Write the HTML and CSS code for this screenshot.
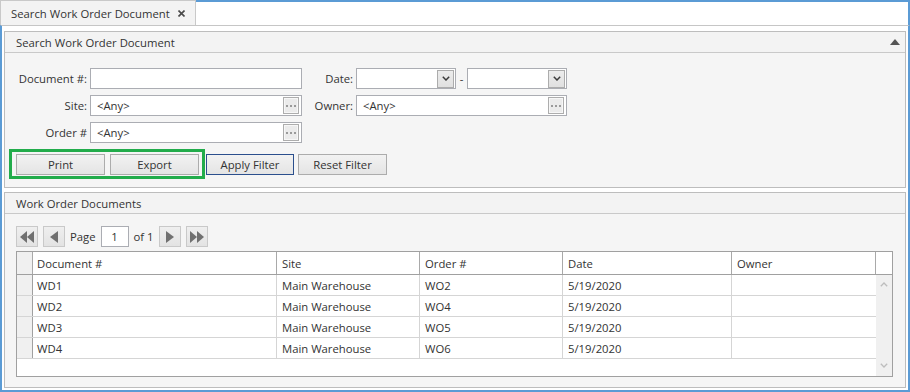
FILE: index.html
```html
<!DOCTYPE html>
<html lang="en">
<head>
    <meta charset="UTF-8">
    <meta name="viewport" content="width=device-width, initial-scale=1.0">
    <title>Search Work Order Document</title>
    <link rel="stylesheet" href="styles.css">
</head>
<body>
<div class="window">

    <div class="tabstrip">
        <div class="tab">
            <span>Search Work Order Document</span>
            <svg class="tab-close" width="7" height="7" viewBox="0 0 7 7"><path d="M0.5 0.5 L6.5 6.5 M6.5 0.5 L0.5 6.5" stroke="#4a4a4a" stroke-width="1.6"/></svg>
        </div>
        <div class="tab-fill"></div>
    </div>

    <div class="content">

        <!-- Filter panel -->
        <section class="panel panel-filter">
            <div class="panel-head">
                <span>Search Work Order Document</span>
                <svg class="collapse" width="10" height="6" viewBox="0 0 10 6"><polygon points="0,6 10,6 5,0" fill="#555"/></svg>
            </div>
            <div class="panel-body">
                <div class="form">
                    <div class="form-col form-left">
                        <div class="field">
                            <label>Document #:</label>
                            <div class="input"></div>
                        </div>
                        <div class="field">
                            <label>Site:</label>
                            <div class="input"><span>&lt;Any&gt;</span><span class="ellipsis"><i></i><i></i><i></i></span></div>
                        </div>
                        <div class="field">
                            <label>Order #</label>
                            <div class="input"><span>&lt;Any&gt;</span><span class="ellipsis"><i></i><i></i><i></i></span></div>
                        </div>
                    </div>
                    <div class="form-col form-right">
                        <div class="field">
                            <label>Date:</label>
                            <div class="input input-date">
                                <span class="drop"><svg width="8" height="5" viewBox="0 0 8 5"><path d="M0.8 0.8 L4 4 L7.2 0.8" fill="none" stroke="#3c3c3c" stroke-width="1.5"/></svg></span>
                            </div>
                            <span class="dash">-</span>
                            <div class="input input-date">
                                <span class="drop"><svg width="8" height="5" viewBox="0 0 8 5"><path d="M0.8 0.8 L4 4 L7.2 0.8" fill="none" stroke="#3c3c3c" stroke-width="1.5"/></svg></span>
                            </div>
                        </div>
                        <div class="field">
                            <label>Owner:</label>
                            <div class="input input-owner"><span>&lt;Any&gt;</span><span class="ellipsis"><i></i><i></i><i></i></span></div>
                        </div>
                    </div>
                </div>

                <div class="actions">
                    <div class="highlight">
                        <button class="btn">Print</button>
                        <button class="btn">Export</button>
                    </div>
                    <button class="btn btn-default">Apply Filter</button>
                    <button class="btn btn-reset">Reset Filter</button>
                </div>
            </div>
        </section>

        <!-- Results panel -->
        <section class="panel panel-results">
            <div class="panel-head">
                <span>Work Order Documents</span>
            </div>
            <div class="panel-body">
                <div class="pager">
                    <button class="pg-btn"><svg width="14" height="12" viewBox="0 0 14 12"><polygon points="7,0 7,12 0,6" fill="#707070"/><polygon points="14,0 14,12 7,6" fill="#707070"/></svg></button>
                    <button class="pg-btn"><svg width="8" height="12" viewBox="0 0 8 12"><polygon points="8,0 8,12 0,6" fill="#707070"/></svg></button>
                    <span>Page</span>
                    <div class="pg-input">1</div>
                    <span>of 1</span>
                    <button class="pg-btn"><svg width="8" height="12" viewBox="0 0 8 12"><polygon points="0,0 0,12 8,6" fill="#707070"/></svg></button>
                    <button class="pg-btn"><svg width="14" height="12" viewBox="0 0 14 12"><polygon points="0,0 0,12 7,6" fill="#707070"/><polygon points="7,0 7,12 14,6" fill="#707070"/></svg></button>
                </div>

                <div class="grid">
                    <div class="grid-head">
                        <div class="c c-ind"></div>
                        <div class="c c-doc">Document #</div>
                        <div class="c c-site">Site</div>
                        <div class="c c-order">Order #</div>
                        <div class="c c-date">Date</div>
                        <div class="c c-owner">Owner</div>
                        <div class="c c-pad"></div>
                    </div>
                    <div class="grid-body">
                        <div class="rows">
                            <div class="row">
                                <div class="c c-ind"></div>
                                <div class="c c-doc">WD1</div>
                                <div class="c c-site">Main Warehouse</div>
                                <div class="c c-order">WO2</div>
                                <div class="c c-date">5/19/2020</div>
                                <div class="c c-owner"></div>
                            </div>
                            <div class="row">
                                <div class="c c-ind"></div>
                                <div class="c c-doc">WD2</div>
                                <div class="c c-site">Main Warehouse</div>
                                <div class="c c-order">WO4</div>
                                <div class="c c-date">5/19/2020</div>
                                <div class="c c-owner"></div>
                            </div>
                            <div class="row">
                                <div class="c c-ind"></div>
                                <div class="c c-doc">WD3</div>
                                <div class="c c-site">Main Warehouse</div>
                                <div class="c c-order">WO5</div>
                                <div class="c c-date">5/19/2020</div>
                                <div class="c c-owner"></div>
                            </div>
                            <div class="row">
                                <div class="c c-ind"></div>
                                <div class="c c-doc">WD4</div>
                                <div class="c c-site">Main Warehouse</div>
                                <div class="c c-order">WO6</div>
                                <div class="c c-date">5/19/2020</div>
                                <div class="c c-owner"></div>
                            </div>
                        </div>
                        <div class="vscroll">
                            <svg width="8" height="5" viewBox="0 0 8 5"><path d="M0.8 4.2 L4 1 L7.2 4.2" fill="none" stroke="#bdbdbd" stroke-width="1.3"/></svg>
                            <svg width="8" height="5" viewBox="0 0 8 5"><path d="M0.8 0.8 L4 4 L7.2 0.8" fill="none" stroke="#bdbdbd" stroke-width="1.3"/></svg>
                        </div>
                    </div>
                </div>
            </div>
        </section>

    </div>
</div>
</body>
</html>
```

FILE: styles.css
```css
/* Reset */
* {
    box-sizing: border-box;
    margin: 0;
    padding: 0;
}

body {
    font-family: "Open Sans", "Noto Sans", Arial, sans-serif;
    font-size: 11.3px;
    color: #333;
    background-color: #fff;
    width: 910px;
    height: 392px;
    overflow: hidden;
}

.window {
    display: flex;
    flex-direction: column;
    width: 910px;
    height: 392px;
}

/* Tab strip */
.tabstrip {
    display: flex;
    height: 25px;
}

.tab {
    width: 196px;
    display: flex;
    align-items: center;
    justify-content: space-between;
    padding: 0 10px 0 10px;
    background-color: #f3f3f3;
    border: 1px solid #c9c9c9;
    border-bottom: none;
}

.tab-fill {
    flex: 1;
    border-top: 2px solid #5b9bd5;
    border-right: 2px solid #5b9bd5;
}

.content {
    flex: 1;
    display: flex;
    flex-direction: column;
    gap: 4px;
    padding: 5px 2px 2px;
    border: 2px solid #5b9bd5;
    border-top: 1px solid #c6c6c6;
}

/* Panels */
.panel {
    border: 1px solid #bdbdbd;
    background-color: #f5f5f5;
}

.panel-head {
    height: 21px;
    display: flex;
    align-items: center;
    justify-content: space-between;
    padding: 0 5px 0 11px;
    background-color: #f3f3f3;
    border-bottom: 1px solid #c9c9c9;
}

.panel-filter .panel-body {
    padding: 15px 11px 8px;
}

.panel-results .panel-body {
    padding: 12px 11px 10px;
}

/* Filter form */
.form {
    display: flex;
}

.form-col {
    display: flex;
    flex-direction: column;
    gap: 6px;
}

.form-right {
    margin-left: 4px;
}

.field {
    display: flex;
    align-items: center;
    gap: 3px;
    height: 21px;
}

.form-left label {
    width: 71px;
    text-align: right;
}

.form-right label {
    width: 47px;
    text-align: right;
}

.input {
    width: 212px;
    height: 21px;
    display: flex;
    align-items: center;
    justify-content: space-between;
    padding: 0 2px 0 6px;
    background-color: #fff;
    border: 1px solid #abadb3;
}

.input-owner {
    width: 211px;
}

.input-date {
    width: 100px;
    justify-content: flex-end;
    padding: 1px;
}

.dash {
    width: 5px;
    text-align: center;
}

.drop {
    width: 17px;
    height: 18px;
    display: flex;
    align-items: center;
    justify-content: center;
    background: linear-gradient(#ececec, #e0e0e0);
    border: 1px solid #acacac;
}

.ellipsis {
    width: 16px;
    height: 17px;
    display: flex;
    align-items: center;
    justify-content: center;
    gap: 2px;
    background-color: #ebebeb;
    border: 1px solid #adadad;
    box-shadow: inset 0 0 0 1px #f7f7f7;
}

.ellipsis i {
    width: 2px;
    height: 2px;
    background-color: #9a9a9a;
}

/* Buttons */
.actions {
    display: flex;
    align-items: center;
    margin-top: 6px;
}

.highlight {
    display: flex;
    gap: 5px;
    margin-left: -7px;
    padding: 2px 3px 1px 4px;
    border: 3px solid #22ac4b;
}

.btn {
    width: 89px;
    height: 21px;
    font: inherit;
    color: #333;
    background: linear-gradient(#f2f2f2, #e4e4e4);
    border: 1px solid #acacac;
}

.btn-default {
    width: 88px;
    margin-left: 1px;
    border-color: #2b4f8d;
}

.btn-reset {
    margin-left: 4px;
}

/* Pager */
.pager {
    display: flex;
    align-items: center;
    gap: 5px;
    height: 21px;
}

.pg-btn {
    width: 22px;
    height: 21px;
    display: flex;
    align-items: center;
    justify-content: center;
    background: linear-gradient(#efefef, #e3e3e3);
    border: 1px solid #c9c9c9;
}

.pg-input {
    width: 28px;
    height: 21px;
    display: flex;
    align-items: center;
    justify-content: center;
    background-color: #fff;
    border: 1px solid #abadb3;
}

/* Data grid */
.grid {
    width: 877px;
    height: 126px;
    margin-top: 4px;
    display: flex;
    flex-direction: column;
    background-color: #fff;
    border: 1px solid #a0a0a0;
}

.grid-head {
    display: flex;
    height: 23px;
    flex-shrink: 0;
    border-bottom: 1px solid #a0a0a0;
}

.grid-body {
    flex: 1;
    display: flex;
}

.rows {
    flex: 1;
}

.row {
    display: flex;
    height: 21px;
    border-bottom: 1px solid #d5d5d5;
}

.c {
    display: flex;
    align-items: center;
    padding-left: 5px;
    white-space: nowrap;
    overflow: hidden;
    border-right: 1px solid #d5d5d5;
}

.grid-head .c {
    border-right-color: #a9a9a9;
}

.c-ind {
    width: 16px;
    background-color: #f0f0f0;
    border-right-color: #a0a0a0;
}

.c-doc {
    width: 244px;
    padding-left: 4px;
}

.c-site,
.c-order {
    width: 143px;
}

.c-date {
    width: 169px;
}

.c-owner {
    width: 144px;
}

.row .c-owner {
    border-right: none;
}

.c-pad {
    width: 16px;
    border-right: none;
}

.vscroll {
    width: 16px;
    display: flex;
    flex-direction: column;
    align-items: center;
    justify-content: space-between;
    padding: 7px 0 8px;
    background-color: #f0f0f0;
}
```
